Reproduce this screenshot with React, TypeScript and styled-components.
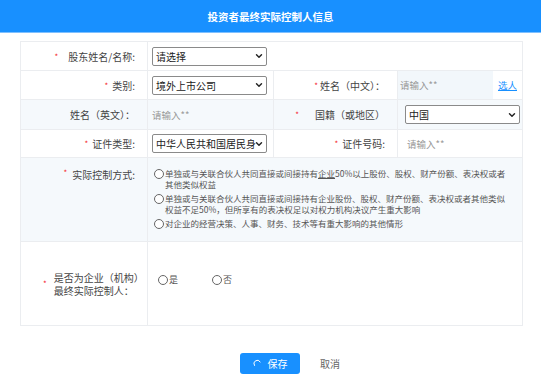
import styled, { createGlobalStyle } from "styled-components";
import { ChevronDown } from "lucide-react";

const GlobalStyle = createGlobalStyle`
  body {
    margin: 0;
    background: #ffffff;
    font-family: "Noto Sans CJK SC", "Noto Sans", sans-serif;
  }
`;

function Select({ value }: { value: string }) {
  return (
    <SelectBox>
      <SelectText>{value}</SelectText>
      <Arrow>
        <ChevronDown size={10} strokeWidth={3.4} color="#222" />
      </Arrow>
    </SelectBox>
  );
}

function Label({ text, required, gap = 4, top, right }: { text: string; required?: boolean; gap?: number; top?: boolean; right?: boolean }) {
  return (
    <LabelCell $top={top} $right={right}>
      {required && <Star style={{ marginRight: gap }}>*</Star>}
      <span>{text}</span>
    </LabelCell>
  );
}

function Radio({ children }: { children: React.ReactNode }) {
  return (
    <RadioLine>
      <Circle />
      <RadioText>{children}</RadioText>
    </RadioLine>
  );
}

export default function App() {
  return (
    <>
      <GlobalStyle />
      <Header>投资者最终实际控制人信息</Header>
      <Form>
        <Row $h={29}>
          <Label text="股东姓名/名称:" required gap={10} />
          <Cell $span={3}>
            <Select value="请选择" />
          </Cell>
        </Row>
        <Row $h={29}>
          <Label text="类别:" required gap={4} />
          <Cell>
            <Select value="境外上市公司" />
          </Cell>
          <Label text="姓名（中文）：" required gap={2} right />
          <InputCell>
            <Placeholder>请输入**</Placeholder>
            <PickLink>选人</PickLink>
          </InputCell>
        </Row>
        <Row $h={30} $tint>
          <Label text="姓名（英文）：" />
          <Cell>
            <Placeholder>请输入**</Placeholder>
          </Cell>
          <Label text="国籍（或地区）" required gap={16} right />
          <Cell $pad={7}>
            <Select value="中国" />
          </Cell>
        </Row>
        <Row $h={28}>
          <Label text="证件类型:" required gap={4} />
          <Cell>
            <Select value="中华人民共和国居民身" />
          </Cell>
          <Label text="证件号码:" required gap={4} right />
          <Cell $pad={9}>
            <Placeholder>请输入**</Placeholder>
          </Cell>
        </Row>
        <Row $h={84} $tint>
          <Label text="实际控制方式:" required gap={5} top />
          <OptionsCell $span={3}>
            <Radio>
              单独或与关联合伙人共同直接或间接持有<u>企业</u>50%以上股份、股权、财产份额、表决权或者
              <br />
              其他类似权益
            </Radio>
            <Radio>
              单独或与关联合伙人共同直接或间接持有企业股份、股权、财产份额、表决权或者其他类似
              <br />
              权益不足50%，但所享有的表决权足以对权力机构决议产生重大影响
            </Radio>
            <Radio>对企业的经营决策、人事、财务、技术等有重大影响的其他情形</Radio>
          </OptionsCell>
        </Row>
        <Row $h={84} $last>
          <FinalLabel>
            <Star>*</Star>
            <LabelLines>
              <div>是否为企业（机构）</div>
              <div>最终实际控制人：</div>
            </LabelLines>
          </FinalLabel>
          <YesNoCell $span={3}>
            <Choice>
              <Circle />是
            </Choice>
            <Choice>
              <Circle />否
            </Choice>
          </YesNoCell>
        </Row>
      </Form>
      <Footer>
        <SaveButton>
          <svg width="9" height="9" viewBox="0 0 10 10">
            <path d="M1.6 7.2 A3.6 3.6 0 0 1 8 3.2" fill="none" stroke="#fff" strokeWidth="1.1" strokeLinecap="round" />
          </svg>
          保存
        </SaveButton>
        <CancelButton>取消</CancelButton>
      </Footer>
    </>
  );
}

const Header = styled.div`
  height: 32px;
  background: #1890ff;
  border-bottom: 1px solid #7fc0ff;
  color: #ffffff;
  font-size: 10.5px;
  font-weight: 700;
  display: flex;
  align-items: center;
  justify-content: center;
`;

const Form = styled.div`
  margin: 8px 18px 0 20px;
  border: 1px solid #ebedf0;
  border-bottom: none;
  font-size: 10px;
  color: #444;
`;

const Row = styled.div<{ $h: number; $tint?: boolean; $last?: boolean }>`
  display: grid;
  grid-template-columns: 126px 126px 124px 1fr;
  height: ${(p) => p.$h}px;
  background: ${(p) => (p.$tint ? "#f5f9fc" : "#ffffff")};
  border-bottom: 1px solid #ebedf0;
  box-sizing: border-box;
`;

const Cell = styled.div<{ $span?: number; $pad?: number }>`
  grid-column: span ${(p) => p.$span ?? 1};
  display: flex;
  align-items: center;
  padding-left: ${(p) => p.$pad ?? 4}px;
  border-left: 1px solid #ebedf0;
`;

const LabelCell = styled.div<{ $top?: boolean; $right?: boolean }>`
  display: flex;
  justify-content: flex-end;
  align-items: ${(p) => (p.$top ? "flex-start" : "center")};
  padding: ${(p) => (p.$top ? "9px 12px 0 0" : "0 12px 0 0")};
  border-left: ${(p) => (p.$right ? "1px solid #ebedf0" : "none")};
  color: #444;
  white-space: nowrap;
`;

const Star = styled.span`
  color: #f5222d;
  font-size: 8px;
`;

const SelectBox = styled.div`
  width: 115px;
  height: 19px;
  box-sizing: border-box;
  border: 1px solid #8a8a8a;
  border-radius: 2px;
  background: #fff;
  display: flex;
  align-items: center;
  justify-content: space-between;
  padding: 0 3px 0 3px;
  color: #222;
`;

const SelectText = styled.span`
  white-space: nowrap;
`;

const Arrow = styled.span`
  display: flex;
  margin: 0 -1px 0 -2px;
`;

const Placeholder = styled.span`
  color: #999;
  font-size: 9.5px;
`;

const InputCell = styled.div`
  display: flex;
  align-items: center;
  justify-content: space-between;
  border-left: 1px solid #ebedf0;
  padding-left: 2px;
  background: linear-gradient(to right, #f2f7fb 95px, #ffffff 95px);
  padding-right: 5px;
`;

const PickLink = styled.a`
  color: #1890ff;
  text-decoration: underline;
  font-size: 9.5px;
`;

const OptionsCell = styled.div<{ $span: number }>`
  grid-column: span ${(p) => p.$span};
  border-left: 1px solid #ebedf0;
  padding: 10px 0 0 6px;
  display: flex;
  flex-direction: column;
  gap: 3px;
`;

const RadioLine = styled.div`
  display: flex;
  align-items: flex-start;
  font-size: 8.5px;
  line-height: 11px;
  color: #555;
`;

const Circle = styled.span`
  width: 8px;
  height: 8px;
  border: 1px solid #666;
  border-radius: 50%;
  flex-shrink: 0;
  margin-top: 1px;
  margin-right: 1px;
  background: #fff;
`;

const RadioText = styled.span`
  white-space: nowrap;
`;

const FinalLabel = styled.div`
  display: flex;
  align-items: center;
  gap: 7px;
  padding-left: 22px;
  color: #444;
  white-space: nowrap;
`;

const LabelLines = styled.div`
  display: flex;
  flex-direction: column;
  line-height: 13px;
`;

const YesNoCell = styled.div<{ $span: number }>`
  grid-column: span ${(p) => p.$span};
  border-left: 1px solid #ebedf0;
  display: flex;
  align-items: center;
  padding: 0 0 8px 10px;
  gap: 34px;
`;

const Choice = styled.span`
  display: flex;
  align-items: center;
  font-size: 9px;
  color: #555;
  & > span {
    margin-top: 0;
  }
`;

const Footer = styled.div`
  display: flex;
  justify-content: center;
  align-items: center;
  gap: 20px;
  margin-top: 27px;
  padding-left: 39px;
`;

const SaveButton = styled.button`
  width: 60px;
  height: 21px;
  border: none;
  border-radius: 3px;
  background: #1890ff;
  color: #fff;
  font-family: inherit;
  font-size: 10px;
  display: flex;
  align-items: center;
  justify-content: center;
  gap: 6px;
  padding: 0;
`;

const CancelButton = styled.span`
  color: #666;
  font-size: 10px;
`;
